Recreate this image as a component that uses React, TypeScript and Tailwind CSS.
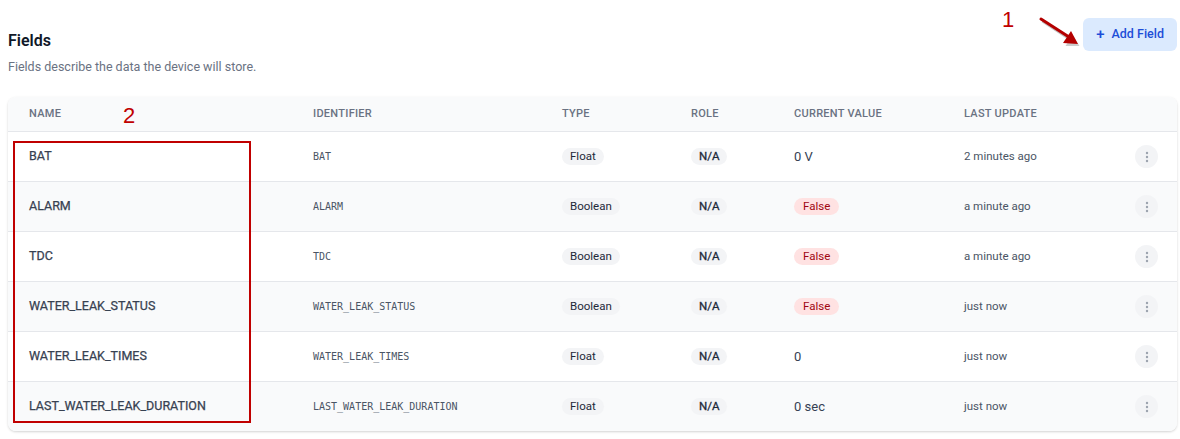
import React from "react";

type Row = {
  name: string;
  type: string;
  value: string;
  valueKind: "text" | "false";
  updated: string;
};

const rows: Row[] = [
  { name: "BAT", type: "Float", value: "0 V", valueKind: "text", updated: "2 minutes ago" },
  { name: "ALARM", type: "Boolean", value: "False", valueKind: "false", updated: "a minute ago" },
  { name: "TDC", type: "Boolean", value: "False", valueKind: "false", updated: "a minute ago" },
  { name: "WATER_LEAK_STATUS", type: "Boolean", value: "False", valueKind: "false", updated: "just now" },
  { name: "WATER_LEAK_TIMES", type: "Float", value: "0", valueKind: "text", updated: "just now" },
  { name: "LAST_WATER_LEAK_DURATION", type: "Float", value: "0 sec", valueKind: "text", updated: "just now" },
];

const grid = "grid grid-cols-[284px_249px_129px_103px_170px_182px_52px] items-center";

function Dots() {
  return (
    <div className="w-[23px] h-[23px] rounded-full bg-gray-100 flex items-center justify-center">
      <svg width="4" height="12" viewBox="0 0 4 12">
        <circle cx="2" cy="2" r="1.2" fill="#9ca3af" />
        <circle cx="2" cy="6" r="1.2" fill="#9ca3af" />
        <circle cx="2" cy="10" r="1.2" fill="#9ca3af" />
      </svg>
    </div>
  );
}

export default function App() {
  return (
    <div
      className="relative w-[1180px] h-[439px] bg-white overflow-hidden"
      style={{ fontFamily: "Roboto, 'Liberation Sans', sans-serif" }}
    >
      <div className="w-[1177px] pl-2 pt-[18px]">
        <div className="flex justify-between items-start">
          <div className="pt-[12px]">
            <h2 className="text-[16px] leading-[22px] font-semibold text-gray-900">Fields</h2>
            <p className="mt-[6px] text-[12.5px] leading-[18px] text-gray-500">
              Fields describe the data the device will store.
            </p>
          </div>
          <button className="h-[33px] px-[13px] rounded-md bg-[#dbeafe] text-[#1d4ed8] text-[12.5px] font-medium flex items-center gap-[7px]">
            <span className="text-[15px] leading-none">+</span>
            <span>Add Field</span>
          </button>
        </div>

        <div className="mt-[21px] w-[1169px] rounded-lg bg-white shadow-[0_1px_3px_rgba(0,0,0,0.12),0_1px_2px_rgba(0,0,0,0.06)] overflow-hidden">
          <div className={`${grid} h-[34px] bg-gray-50 text-[11px] font-medium uppercase tracking-wide text-gray-500`}>
            <div className="pl-[21px]">Name</div>
            <div className="pl-[21px]">Identifier</div>
            <div className="pl-[21px]">Type</div>
            <div className="pl-[21px]">Role</div>
            <div className="pl-[21px]">Current Value</div>
            <div className="pl-[21px]">Last Update</div>
            <div />
          </div>
          {rows.map((r, i) => (
            <div
              key={r.name}
              className={`${grid} h-[50px] border-t border-gray-200 ${i % 2 === 1 ? "bg-gray-50" : "bg-white"}`}
            >
              <div className="pl-[21px] text-[12.5px] font-normal text-[#374151] [-webkit-text-stroke:0.25px_#374151]">{r.name}</div>
              <div
                className="pl-[21px] text-[10px] text-gray-600"
                style={{ fontFamily: "'DejaVu Sans Mono', monospace" }}
              >
                {r.name}
              </div>
              <div className="pl-[21px] flex items-center">
                <span className="px-[8px] h-[17px] leading-[17px] rounded-full bg-gray-100 text-[11.5px] text-gray-800">
                  {r.type}
                </span>
              </div>
              <div className="pl-[21px] flex items-center">
                <span className="px-[8px] h-[17px] leading-[17px] rounded-full bg-gray-100 text-[11.5px] font-normal text-gray-800 [-webkit-text-stroke:0.3px_#1f2937]">
                  N/A
                </span>
              </div>
              <div className="pl-[21px] flex items-center">
                {r.valueKind === "false" ? (
                  <span className="px-[9px] h-[17px] leading-[17px] rounded-full bg-red-100 text-[11.5px] text-red-800">
                    {r.value}
                  </span>
                ) : (
                  <span className="text-[13px] text-gray-700">{r.value}</span>
                )}
              </div>
              <div className="pl-[21px] text-[11.5px] text-gray-600">{r.updated}</div>
              <div className="flex justify-start pl-[10px]">
                <Dots />
              </div>
            </div>
          ))}
        </div>
      </div>

      {/* annotations */}
      <div className="absolute left-[13px] top-[141px] w-[238px] h-[282px] border-2 border-[#c00000]" />
      <div className="absolute left-[123px] top-[105px] text-[22px] leading-none text-[#c00000]" style={{ fontFamily: "'Liberation Sans', sans-serif" }}>
        2
      </div>
      <div className="absolute left-[1002px] top-[9px] text-[22px] leading-none text-[#c00000]" style={{ fontFamily: "'Liberation Sans', sans-serif" }}>
        1
      </div>
      <svg className="absolute left-[1036px] top-[14px]" width="48" height="36" viewBox="0 0 48 36">
        <line x1="5" y1="5" x2="34" y2="24" stroke="rgba(0,0,0,0.25)" strokeWidth="3" transform="translate(1.5,2)" />
        <polygon points="28,30 42,30 35,19" fill="rgba(0,0,0,0.2)" transform="translate(1.5,2)" />
        <line x1="5" y1="5" x2="33" y2="23" stroke="#b40000" strokeWidth="3" strokeLinecap="round" />
        <polygon points="27,29 42,30 35,17" fill="#b40000" />
      </svg>
    </div>
  );
}
